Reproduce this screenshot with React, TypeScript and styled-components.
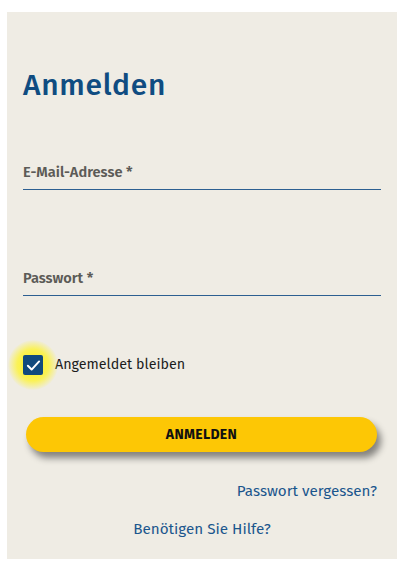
import React, { useState } from 'react';
import styled, { createGlobalStyle } from 'styled-components';

const GlobalStyle = createGlobalStyle`
  html, body {
    margin: 0;
    padding: 0;
    background: #ffffff;
  }
  body {
    font-family: "Fira Sans", "Noto Sans", "Open Sans", sans-serif;
  }
  * {
    box-sizing: border-box;
  }
`;

const Page = styled.div`
  padding: 12px 6px 18px 7px;
`;

const Card = styled.form`
  width: 390px;
  background-color: #efece4;
  padding: 55px 16px 20px 16px;
  display: flex;
  flex-direction: column;
`;

const Title = styled.h1`
  margin: 0 0 59px 0;
  font-size: 30px;
  line-height: 36px;
  font-weight: 500;
  letter-spacing: 0.7px;
  color: #0f4c81;
`;

const Field = styled.label<{ gap: number }>`
  display: flex;
  flex-direction: column;
  margin-bottom: ${props => props.gap}px;
`;

const FieldLabel = styled.span`
  font-size: 14.6px;
  line-height: 20px;
  font-weight: 600;
  color: #5c5b57;
`;

const FieldInput = styled.input`
  border: none;
  border-bottom: 1px solid #2d5f91;
  background: transparent;
  height: 8px;
  padding: 0;
  outline: none;
  font-family: inherit;
`;

const CheckRow = styled.label`
  display: flex;
  align-items: center;
  gap: 12px;
  margin-bottom: 42px;
  cursor: pointer;
`;

const CheckWrap = styled.span`
  position: relative;
  width: 20px;
  height: 20px;
  flex-shrink: 0;
  &::before {
    content: '';
    position: absolute;
    left: -15px;
    top: -15px;
    width: 50px;
    height: 50px;
    border-radius: 50%;
    background: radial-gradient(circle, rgba(255, 242, 0, 0.95) 0%, rgba(255, 244, 30, 0.7) 45%, rgba(255, 250, 120, 0) 72%);
  }
`;

const CheckBox = styled.span<{ checked: boolean }>`
  position: relative;
  display: flex;
  align-items: center;
  justify-content: center;
  width: 20px;
  height: 20px;
  border-radius: 2px;
  background-color: ${props => (props.checked ? '#114a7d' : 'transparent')};
  border: ${props => (props.checked ? 'none' : '2px solid #555')};
`;

const CheckText = styled.span`
  font-size: 14.3px;
  line-height: 20px;
  color: #1c1c1c;
`;

const SubmitButton = styled.button`
  margin: 0 4px 29px 3px;
  height: 35px;
  border: none;
  border-radius: 18px;
  background-color: #fdc705;
  box-shadow: 4px 6px 7px rgba(0, 0, 0, 0.45);
  font-family: inherit;
  font-size: 14px;
  font-weight: 700;
  letter-spacing: 0.3px;
  color: #111111;
  cursor: pointer;
`;

const LinkRow = styled.div<{ align: string; gap: number }>`
  display: flex;
  justify-content: ${props => props.align};
  padding-right: ${props => (props.align === 'flex-end' ? '4px' : '0')};
  margin-bottom: ${props => props.gap}px;
`;

const TextLink = styled.a`
  font-size: 15.2px;
  line-height: 20px;
  color: #1b568d;
  text-decoration: none;
  cursor: pointer;
`;

const App: React.FC = () => {
  const [email, setEmail] = useState('');
  const [password, setPassword] = useState('');
  const [remember, setRemember] = useState(true);

  return (
    <Page>
      <GlobalStyle />
      <Card onSubmit={e => e.preventDefault()}>
        <Title>Anmelden</Title>
        <Field gap={78}>
          <FieldLabel>E-Mail-Adresse *</FieldLabel>
          <FieldInput type="email" value={email} onChange={e => setEmail(e.target.value)} />
        </Field>
        <Field gap={59}>
          <FieldLabel>Passwort *</FieldLabel>
          <FieldInput type="password" value={password} onChange={e => setPassword(e.target.value)} />
        </Field>
        <CheckRow onClick={() => setRemember(!remember)}>
          <CheckWrap>
            <CheckBox checked={remember}>
              {remember && (
                <svg width="15" height="15" viewBox="0 0 24 24" fill="none">
                  <path d="M3 12.5l6 6L21 5.5" stroke="#ffffff" strokeWidth="3.2" strokeLinecap="round" strokeLinejoin="round" />
                </svg>
              )}
            </CheckBox>
          </CheckWrap>
          <CheckText>Angemeldet bleiben</CheckText>
        </CheckRow>
        <SubmitButton type="submit">ANMELDEN</SubmitButton>
        <LinkRow align="flex-end" gap={18}>
          <TextLink>Passwort vergessen?</TextLink>
        </LinkRow>
        <LinkRow align="center" gap={0}>
          <TextLink>Benötigen Sie Hilfe?</TextLink>
        </LinkRow>
      </Card>
    </Page>
  );
};

export default App;
